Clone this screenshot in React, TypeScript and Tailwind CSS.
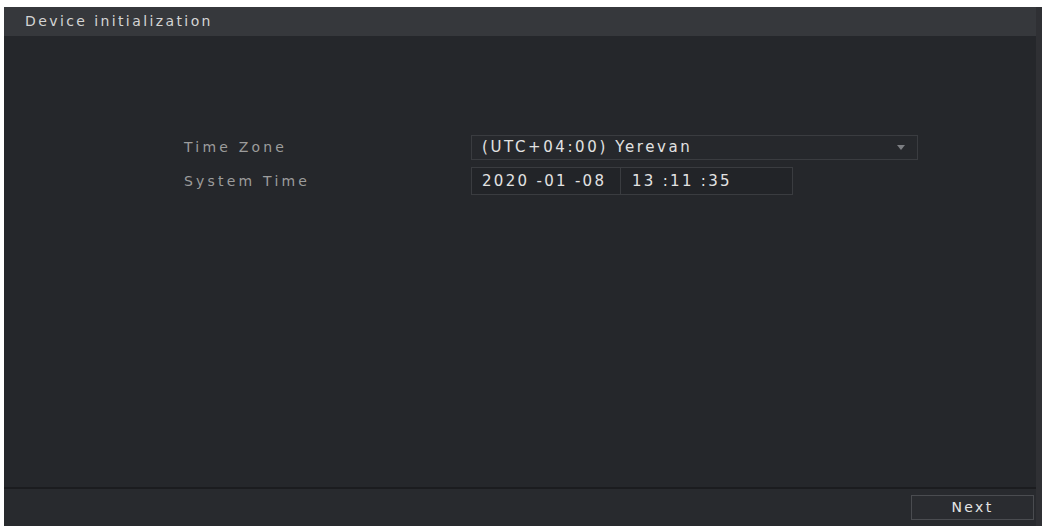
export default function App() {
  return (
    <div className="w-[1042px] h-[526px] bg-white pt-[7px] pl-[4px] font-['DejaVu_Sans',sans-serif]">
      <div className="flex h-[519px] w-[1038px] bg-[#2a2c2f]">
        <div className="flex flex-1 flex-col w-[1032px]">
          {/* Header */}
          <div className="flex h-[29px] items-center bg-[#36383c] pl-[21px]">
            <span className="text-[14px] tracking-[2.4px] text-[#d4d4d4]">Device initialization</span>
          </div>

          {/* Body */}
          <div className="flex-1 bg-[#25272b] pt-[99px] pl-[180px]">
            <div className="flex items-center h-[25px]">
              <span className="w-[287px] text-[14px] tracking-[3.2px] text-[#9c9c9c]">Time Zone</span>
              <div className="flex h-[25px] w-[447px] items-center justify-between border border-[#3a3c40] bg-[#26282c] pl-[10px] pr-[12px]">
                <span className="text-[15px] tracking-[2.6px] text-[#e2e2e2]">(UTC+04:00) Yerevan</span>
                <svg width="8" height="5" viewBox="0 0 8 5"><path d="M0 0h8L4 5z" fill="#7c7e82" /></svg>
              </div>
            </div>
            <div className="mt-[7px] flex items-center h-[28px]">
              <span className="w-[287px] text-[14px] tracking-[3.2px] text-[#9c9c9c]">System Time</span>
              <div className="flex h-[28px] w-[322px] items-stretch border border-[#3a3c40] bg-[#222428]">
                <div className="flex w-[149px] items-center border-r border-[#3a3c40] pl-[10px]">
                  <span className="text-[15px] tracking-[2.3px] text-[#e2e2e2] whitespace-pre">2020 -01 -08</span>
                </div>
                <div className="flex flex-1 items-center pl-[11px]">
                  <span className="text-[15px] tracking-[2.3px] text-[#e2e2e2] whitespace-pre">13 :11 :35</span>
                </div>
              </div>
            </div>
          </div>

          {/* Footer */}
          <div className="h-[2px] bg-[#1b1c1f]" />
          <div className="flex h-[37px] items-center justify-end bg-[#282a2e] pr-[2px]">
            <button className="h-[25px] w-[123px] border border-[#4a4c50] bg-[#2a2c30] text-[14px] tracking-[2.4px] text-[#e4e4e4]">
              Next
            </button>
          </div>
        </div>
        <div className="w-[6px] bg-[#2f3034]" />
      </div>
    </div>
  );
}
